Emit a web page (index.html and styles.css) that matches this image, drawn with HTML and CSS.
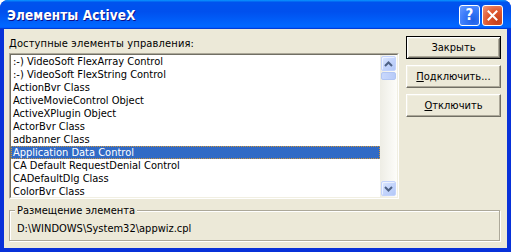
FILE: index.html
```html
<!DOCTYPE html>
<html lang="ru">
<head>
<meta charset="utf-8">
<title>Элементы ActiveX</title>
<link rel="stylesheet" href="styles.css">
</head>
<body>
<div class="window">
  <div class="titlebar">
    <span class="title">Элементы ActiveX</span>
    <div class="tb-buttons">
      <div class="tb-btn help">?</div>
      <div class="tb-btn close">
        <svg width="11" height="11" viewBox="0 0 11 11"><path d="M1.5 1.5 L9.5 9.5 M9.5 1.5 L1.5 9.5" stroke="#fff" stroke-width="2" stroke-linecap="square" fill="none"/></svg>
      </div>
    </div>
  </div>
  <div class="body">
    <div class="top">
      <div class="left">
        <div class="label">Доступные элементы управления:</div>
        <div class="listbox">
          <div class="listbox-inner">
            <ul class="items">
              <li>:-) VideoSoft FlexArray Control</li>
              <li>:-) VideoSoft FlexString Control</li>
              <li>ActionBvr Class</li>
              <li>ActiveMovieControl Object</li>
              <li>ActiveXPlugin Object</li>
              <li>ActorBvr Class</li>
              <li>adbanner Class</li>
              <li class="selected">Application Data Control</li>
              <li>CA Default RequestDenial Control</li>
              <li>CADefaultDlg Class</li>
              <li>ColorBvr Class</li>
            </ul>
            <div class="scrollbar">
              <div class="sb-btn">
                <svg width="9" height="6" viewBox="0 0 9 6"><path d="M1 5 L4.5 1.5 L8 5" stroke="#4d6185" stroke-width="2" fill="none"/></svg>
              </div>
              <div class="sb-thumb"></div>
              <div class="sb-btn sb-down">
                <svg width="9" height="6" viewBox="0 0 9 6"><path d="M1 1 L4.5 4.5 L8 1" stroke="#4d6185" stroke-width="2" fill="none"/></svg>
              </div>
            </div>
          </div>
        </div>
      </div>
      <div class="buttons">
        <div class="btn default">Закрыть</div>
        <div class="btn"><u>П</u>одключить...</div>
        <div class="btn"><u>О</u>тключить</div>
      </div>
    </div>
    <div class="group">
      <div class="group-label">Размещение элемента</div>
      <div class="path">D:\WINDOWS\System32\appwiz.cpl</div>
    </div>
  </div>
</div>
</body>
</html>
```
FILE: styles.css
```css
html, body {
  margin: 0;
  padding: 0;
  background: #ffffff;
}

body {
  font-family: "DejaVu Sans Condensed", "DejaVu Sans", sans-serif;
  font-stretch: condensed;
  font-size: 11px;
  color: #000;
}

.window {
  width: 511px;
  height: 252px;
  box-sizing: border-box;
  display: flex;
  flex-direction: column;
  background: #0831d9;
  border-radius: 8px 8px 0 0;
  overflow: hidden;
}

.titlebar {
  height: 29px;
  flex: none;
  display: flex;
  align-items: center;
  justify-content: space-between;
  padding: 0 8px 0 7px;
  background: linear-gradient(180deg, #0997ff, #0053ee 8%, #0050ee 40%, #0066ff 88%, #0066ff 93%, #005bff 95%, #003dd7 96%, #003dd7);
}

.title {
  font-family: "DejaVu Sans Condensed", "DejaVu Sans", sans-serif;
  font-weight: bold;
  font-size: 13.5px;
  color: #fff;
  text-shadow: 1px 1px #0f1089;
  letter-spacing: 0.1px;
  padding-top: 1px;
}

.tb-buttons {
  display: flex;
  gap: 2px;
  padding-top: 2px;
}

.tb-btn {
  width: 21px;
  height: 21px;
  box-sizing: border-box;
  border: 1px solid #fff;
  border-radius: 3px;
  display: flex;
  align-items: center;
  justify-content: center;
}

.help {
  background: radial-gradient(circle at 70% 75%, #1f5fe6 0%, #3c7dfb 55%, #6b9dff 100%);
  color: #fff;
  font-family: "DejaVu Sans", sans-serif;
  font-weight: bold;
  font-size: 15px;
  line-height: 1;
}

.close {
  background: radial-gradient(circle at 75% 80%, #c4401c 0%, #e0582f 50%, #f09a80 100%);
}

.body {
  flex: 1;
  margin: 0 4px 4px;
  background: #ece9d8;
  padding: 7px 6px 0 5px;
  display: flex;
  flex-direction: column;
}

.top {
  display: flex;
  gap: 7px;
}

.left {
  width: 390px;
}

.label {
  padding-top: 1px;
  line-height: 13px;
  margin-bottom: 3px;
  white-space: nowrap;
  letter-spacing: 0.15px;
}

.listbox {
  height: 146px;
  box-sizing: border-box;
  border: 1px solid;
  border-color: #aca899 #fff #fff #aca899;
}

.listbox-inner {
  height: 100%;
  box-sizing: border-box;
  border: 1px solid;
  border-color: #716f64 #f1efe2 #f1efe2 #716f64;
  display: flex;
}

.items {
  flex: 1;
  margin: 0;
  padding: 0;
  list-style: none;
  background: #fff;
  overflow: hidden;
}

.items li {
  height: 13px;
  line-height: 13px;
  padding-left: 2px;
  white-space: nowrap;
  box-sizing: border-box;
}

.items li.selected {
  background: #316ac5;
  color: #fff;
  outline: 1px dotted #ce953a;
  outline-offset: -1px;
}

.scrollbar {
  width: 17px;
  flex: none;
  display: flex;
  flex-direction: column;
  background: linear-gradient(90deg, #eeede5, #fdfdfa);
}

.sb-btn {
  height: 15px;
  margin: 1px 1px 0 1px;
  box-sizing: border-box;
  border: 1px solid #c3d3fd;
  border-radius: 2px;
  background: linear-gradient(135deg, #dde8fe 0%, #c6d6fc 45%, #b3c8f7 100%);
  box-shadow: inset 1px 1px rgba(255, 255, 255, 0.6);
  display: flex;
  align-items: center;
  justify-content: center;
}

.sb-down {
  margin-top: auto;
  margin-bottom: 1px;
}

.sb-thumb {
  height: 8px;
  margin: 1px 1px 0 1px;
  box-sizing: border-box;
  border: 1px solid #b1c5f3;
  border-radius: 2px;
  background: linear-gradient(90deg, #c9d8fc, #b8cbf8);
}

.buttons {
  width: 95px;
  display: flex;
  flex-direction: column;
  gap: 6px;
}

.btn {
  height: 23px;
  box-sizing: border-box;
  background: #ece9d8;
  border: 1px solid;
  border-color: #fff #716f64 #716f64 #fff;
  box-shadow: inset -1px -1px #aca899, inset 1px 1px #f1efe2;
  display: flex;
  align-items: center;
  justify-content: center;
  white-space: nowrap;
}

.btn.default {
  border: 1px solid #000;
  box-shadow: inset 1px 1px #fff, inset -1px -1px #716f64, inset 2px 2px #f1efe2, inset -2px -2px #aca899;
}

.btn u {
  text-decoration: underline;
}

.group {
  margin-top: 11px;
  margin-right: 1px;
  border: 1px solid #aca899;
  box-shadow: inset 1px 1px #fff, 1px 1px #fff;
  padding: 0 7px 5px;
}

.group-label {
  width: fit-content;
  margin: -7px 0 0 -2px;
  padding: 0 2px;
  background: #ece9d8;
  line-height: 13px;
  white-space: nowrap;
}

.path {
  margin-top: 5px;
  line-height: 13px;
  white-space: nowrap;
}
```
